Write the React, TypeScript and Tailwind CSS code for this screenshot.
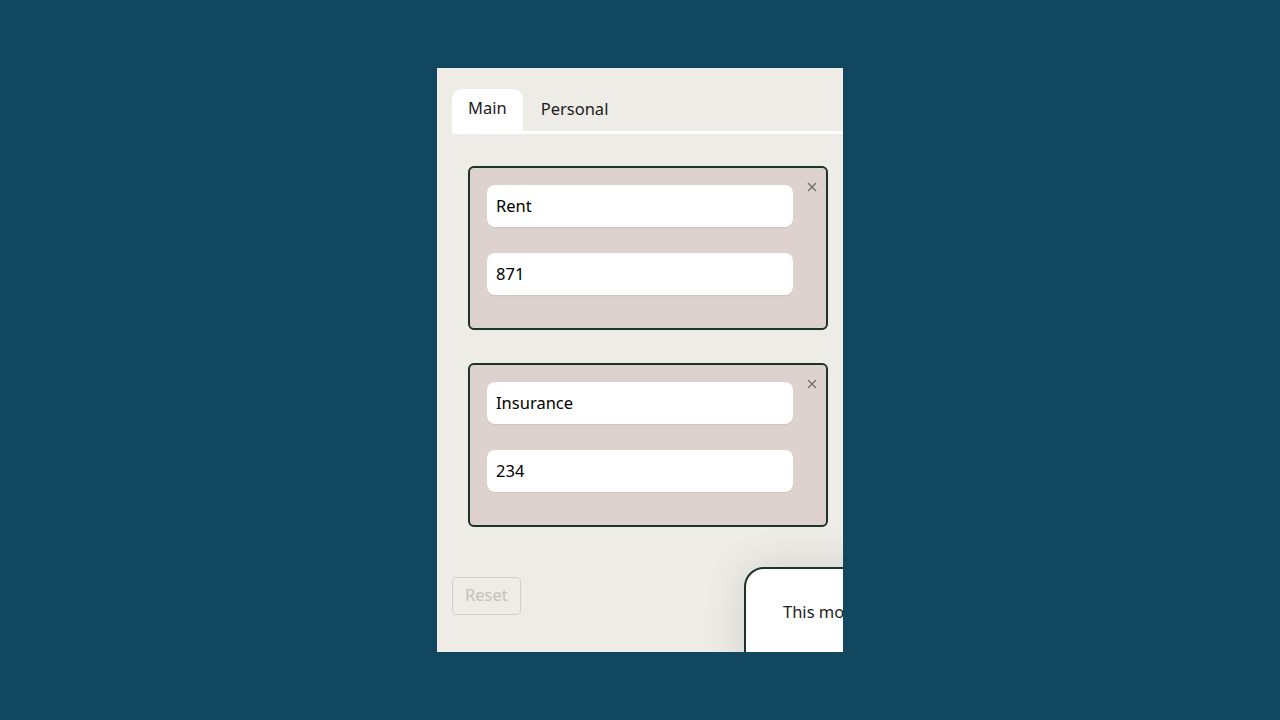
import { useState } from 'react';

interface Expense {
  id: number;
  name: string;
  amount: string;
}

const initialExpenses: Expense[] = [
  { id: 1, name: 'Rent', amount: '871' },
  { id: 2, name: 'Insurance', amount: '234' },
];

export default function App() {
  const [tab, setTab] = useState<'main' | 'personal'>('main');
  const [expenses, setExpenses] = useState<Expense[]>(initialExpenses);

  const update = (id: number, key: 'name' | 'amount', value: string) => {
    setExpenses((list) => list.map((e) => (e.id === id ? { ...e, [key]: value } : e)));
  };

  return (
    <div
      className="w-full h-screen flex items-center justify-center bg-[#11475f]"
      style={{ fontFamily: '"Noto Sans", "Open Sans", sans-serif' }}
    >
      <div className="relative w-[406px] h-[584px] bg-[#eeece7] overflow-hidden">
        {/* Tabs */}
        <div className="pt-[21px] pl-[15px]">
          <div className="flex">
            <button
              onClick={() => setTab('main')}
              className={`h-[42px] px-[16px] pb-[4px] rounded-t-[10px] text-[16.5px] text-[#1c1c1c] ${
                tab === 'main' ? 'bg-white' : ''
              }`}
            >
              Main
            </button>
            <button
              onClick={() => setTab('personal')}
              className={`h-[42px] px-[18px] pb-[2px] rounded-t-[10px] text-[16.5px] text-[#1c1c1c] ${
                tab === 'personal' ? 'bg-white' : ''
              }`}
            >
              Personal
            </button>
          </div>
          <div className="h-[3px] bg-white" />
        </div>

        {/* Expense cards */}
        <div className="pl-[31px] pr-[15px] pt-[32px] flex flex-col gap-[33px]">
          {expenses.map((item) => (
            <div
              key={item.id}
              className="relative h-[164px] bg-[#ddd2ce] border-2 border-[#1b3328] rounded-[6px] pt-[17px] pl-[17px] pr-[33px] flex flex-col gap-[26px]"
            >
              <input
                value={item.name}
                onChange={(e) => update(item.id, 'name', e.target.value)}
                className="h-[42px] w-full bg-white rounded-[8px] px-[9px] pb-[2px] text-[16.5px] text-black outline-none shadow-[0_1px_1px_rgba(0,0,0,0.08)]"
              />
              <input
                value={item.amount}
                onChange={(e) => update(item.id, 'amount', e.target.value)}
                className="h-[42px] w-full bg-white rounded-[8px] px-[9px] pb-[2px] text-[16.5px] text-black outline-none shadow-[0_1px_1px_rgba(0,0,0,0.08)]"
              />
              <button
                onClick={() => setExpenses((list) => list.filter((e) => e.id !== item.id))}
                className="absolute top-[12px] right-[7px] w-[14px] h-[14px] flex items-center justify-center text-[#6b6b6b]"
                aria-label="Remove"
              >
                <svg width="10" height="10" viewBox="0 0 10 10" fill="none" stroke="currentColor" strokeWidth="1.2">
                  <path d="M1 1l8 8M9 1l-8 8" />
                </svg>
              </button>
            </div>
          ))}
        </div>

        {/* Footer */}
        <div className="pl-[15px] pt-[50px]">
          <button
            disabled
            className="h-[38px] px-[12px] pb-[2px] border border-[#d2cfca] rounded-[4px] text-[16.5px] text-[#c4c1bc]"
          >
            Reset
          </button>
        </div>

        {/* Summary popup */}
        <div className="absolute left-[307px] top-[499px] w-[340px] h-[200px] bg-white border-2 border-[#1b3328] rounded-tl-[20px] shadow-[0_0_40px_rgba(0,0,0,0.12)] pl-[37px] pt-[31px]">
          <p className="text-[16.5px] text-[#222] whitespace-nowrap">This month's total</p>
        </div>
      </div>
    </div>
  );
}
